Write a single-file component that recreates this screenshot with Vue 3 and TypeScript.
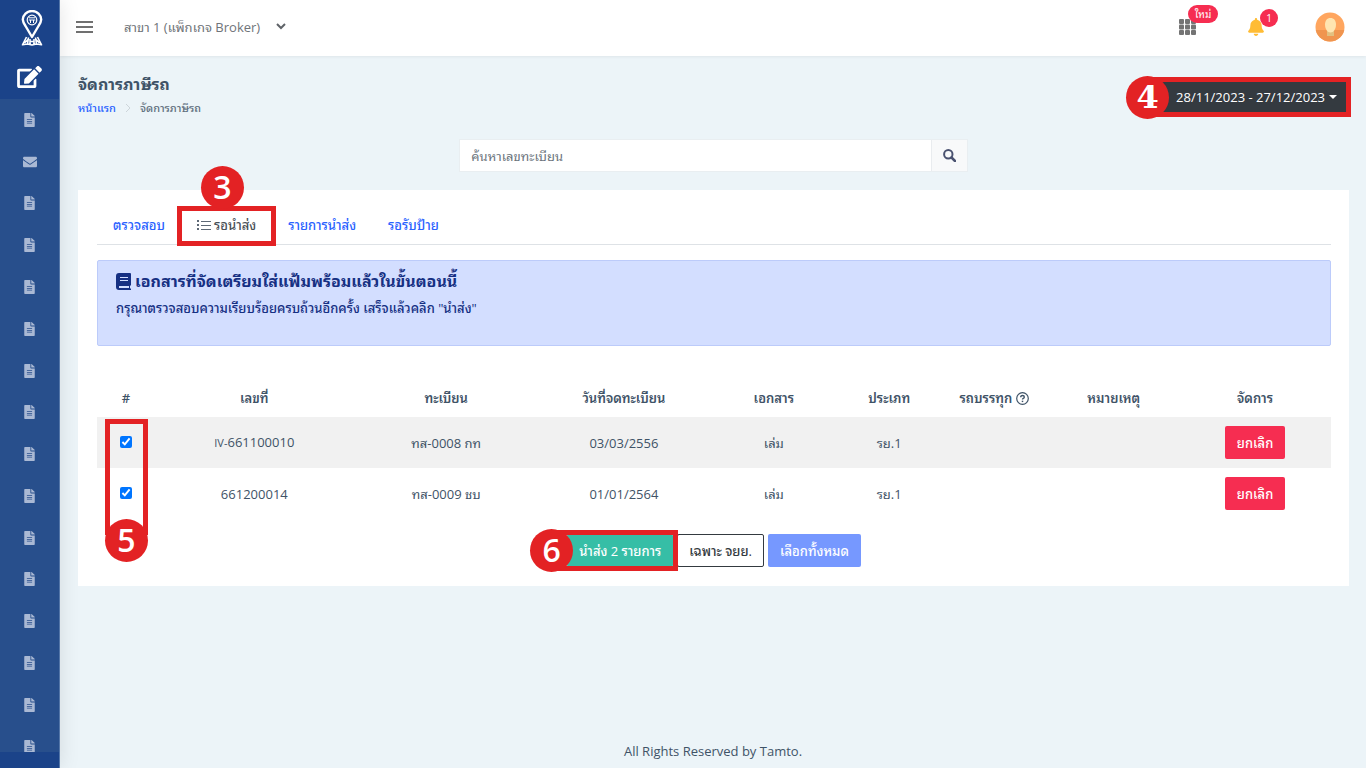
<script setup lang="ts">
import { computed, ref } from 'vue'

interface Row {
  prefix: string
  no: string
  plate: string
  date: string
  doc: string
  kind: string
  checked: boolean
}

const fileIcon =
  'M224 136V0H24C10.7 0 0 10.7 0 24v464c0 13.3 10.7 24 24 24h336c13.3 0 24-10.7 24-24V160H248c-13.2 0-24-10.8-24-24zm64 236c0 6.6-5.4 12-12 12H108c-6.6 0-12-5.4-12-12v-8c0-6.6 5.4-12 12-12h168c6.6 0 12 5.4 12 12v8zm0-64c0 6.6-5.4 12-12 12H108c-6.6 0-12-5.4-12-12v-8c0-6.6 5.4-12 12-12h168c6.6 0 12 5.4 12 12v8zm0-72v8c0 6.6-5.4 12-12 12H108c-6.6 0-12-5.4-12-12v-8c0-6.6 5.4-12 12-12h168c6.6 0 12 5.4 12 12zm96-114.1v6.1H256V0h6.1c6.4 0 12.5 2.5 17 7l97.9 98c4.5 4.5 7 10.6 7 16.9z'
const mailIcon =
  'M502.3 190.8c3.9-3.1 9.7-.2 9.7 4.7V400c0 26.5-21.5 48-48 48H48c-26.5 0-48-21.5-48-48V195.6c0-5 5.7-7.8 9.7-4.7 22.4 17.4 52.1 39.5 154.1 113.6 21.1 15.4 56.7 47.8 92.2 47.6 35.7.3 72-32.8 92.3-47.6 102-74.1 131.6-96.3 154-113.7zM256 320c23.2.4 56.6-29.2 73.4-41.4 132.7-96.3 142.8-104.7 173.4-128.7 5.8-4.5 9.2-11.5 9.2-18.9v-19c0-26.5-21.5-48-48-48H48c-26.5 0-48 21.5-48 48v19c0 7.4 3.4 14.3 9.2 18.9 30.6 23.9 40.7 32.4 173.4 128.7 16.8 12.2 50.2 41.8 73.4 41.4z'

const menu = ['file', 'mail', ...Array<string>(14).fill('file')]

const tabs = ['ตรวจสอบ', 'รอนำส่ง', 'รายการนำส่ง', 'รอรับป้าย']
const activeTab = ref(1)

const rows = ref<Row[]>([
  { prefix: 'IV-', no: '661100010', plate: 'ทส-0008 กท', date: '03/03/2556', doc: 'เล่ม', kind: 'รย.1', checked: true },
  { prefix: '', no: '661200014', plate: 'ทส-0009 ชบ', date: '01/01/2564', doc: 'เล่ม', kind: 'รย.1', checked: true },
])
const selected = computed(() => rows.value.filter((r) => r.checked).length)
const selectAll = () => rows.value.forEach((r) => (r.checked = true))
const keyword = ref('')
</script>

<template>
  <div class="shell">
    <nav class="sidebar" aria-label="เมนูหลัก">
      <a class="logo" href="#" aria-label="Tamto">
        <svg width="22" height="37" viewBox="0 0 22 37" fill="none" stroke="#fff">
          <path d="M11 27 4.500 16C2.500 13 1.800 11.500 1.800 9.600a9.200 8.600 0 0 1 18.400 0c0 1.900-.7 3.400-2.700 6.400z" stroke-width="2.400" stroke-linejoin="round" />
          <circle cx="11" cy="10" r="4.800" stroke-width="1.200" />
          <path d="M8 7.800h6M7.800 10h6.500M9.500 10v3M12.500 10v3" stroke-width="1" />
          <path d="M5.500 27 1.500 34.800l5-.8 4.500 1 4.500-1 5 .8L16.500 27M7.500 27.500l-1 6.500M14.500 27.500l1 6.500M3.500 33l4-4M18.500 33l-4-4M9 29v5M13 29v5M9 31.500h4" stroke-width="1.600" stroke-linejoin="round" />
        </svg>
      </a>
      <a class="side-active" href="#" aria-label="จัดการภาษีรถ">
        <svg width="25" height="22" viewBox="0 0 576 512" fill="#fff">
          <path d="M402.600 83.200l90.200 90.200c3.800 3.800 3.800 10 0 13.800L274.400 405.600l-92.800 10.300c-12.400 1.400-22.900-9.100-21.500-21.500l10.300-92.800L388.800 83.200c3.800-3.800 10-3.800 13.800 0zm162-22.900l-48.800-48.800c-15.200-15.200-39.900-15.200-55.200 0l-35.400 35.400c-3.800 3.800-3.800 10 0 13.800l90.200 90.200c3.800 3.800 10 3.800 13.800 0l35.400-35.400c15.200-15.300 15.200-40 0-55.200zM384 346.200V448H64V128h229.800c3.200 0 6.200-1.300 8.500-3.500l40-40c7.600-7.600 2.200-20.500-8.500-20.500H48C21.500 64 0 85.500 0 112v352c0 26.500 21.500 48 48 48h352c26.500 0 48-21.500 48-48V306.200c0-10.700-12.900-16-20.500-8.500l-40 40c-2.200 2.300-3.500 5.300-3.500 8.500z" />
        </svg>
      </a>
      <ul class="side-list">
        <li v-for="(m, i) in menu" :key="i">
          <a href="#" :aria-label="m === 'mail' ? 'ข้อความ' : 'เอกสาร'">
            <svg v-if="m === 'mail'" width="14" height="14" viewBox="0 0 512 512"><path :d="mailIcon" /></svg>
            <svg v-else width="11" height="14" viewBox="0 0 384 512"><path :d="fileIcon" /></svg>
          </a>
        </li>
      </ul>
      <div class="side-foot"></div>
    </nav>

    <div class="page">
      <header class="topbar">
        <button class="icon-btn" type="button" aria-label="เมนู">
          <svg width="17" height="12" viewBox="0 0 17 12" stroke="#707070" stroke-width="2"><path d="M0 1h17M0 6h17M0 11h17" /></svg>
        </button>
        <div class="branch">
          <select aria-label="สาขา">
            <option>สาขา 1 (แพ็กเกจ Broker)</option>
          </select>
          <svg width="10" height="7" viewBox="0 0 10 7" fill="none" stroke="#5f6368" stroke-width="2"><path d="M1 1l4 4 4-4" /></svg>
        </div>
        <div class="top-right">
          <button class="icon-btn" type="button" aria-label="แอป">
            <svg width="18" height="16" viewBox="0 0 18 16" fill="#747474">
              <g v-for="y in [0, 6, 12]" :key="y">
                <rect v-for="x in [0, 6, 12]" :key="x" :x="x" :y="y - y / 12" width="5" height="5" rx="1" />
              </g>
            </svg>
            <span class="pill">ใหม่</span>
          </button>
          <button class="icon-btn" type="button" aria-label="การแจ้งเตือน">
            <svg width="16" height="18" viewBox="0 0 448 512" fill="#ffbc34">
              <path d="M224 512c35.320 0 63.970-28.650 63.970-64H160.030c0 35.350 28.650 64 63.970 64zm215.390-149.710c-19.320-20.760-55.470-51.990-55.470-154.290 0-77.700-54.480-139.900-127.940-155.160V32c0-17.670-14.320-32-31.980-32s-31.980 14.330-31.980 32v20.840C118.560 68.100 64.080 130.300 64.080 208c0 102.300-36.150 133.530-55.470 154.290-6 6.450-8.660 14.160-8.610 21.710.11 16.400 12.980 32 32.100 32h383.800c19.120 0 32-15.600 32.100-32 .05-7.550-2.610-15.270-8.610-21.710z" />
            </svg>
            <span class="pill round">1</span>
          </button>
          <button class="icon-btn" type="button" aria-label="บัญชีผู้ใช้">
            <svg width="30" height="30" viewBox="0 0 30 30">
              <clipPath id="face"><circle cx="15" cy="15" r="14.500" /></clipPath>
              <g clip-path="url(#face)">
                <path fill="#ffa65f" d="M0 0h30v30H0z" />
                <path fill="#f0954f" d="M0 18h30v12H0z" />
                <path fill="#e2c080" d="M12 18h7v6h-7z" />
                <path fill="#ffe5b0" d="M15.500 6c3.500 0 5.500 2.700 5.500 6.500 0 4.500-2.500 8-5.500 8s-5.500-3.500-5.500-8C10 8.700 12 6 15.500 6z" />
              </g>
            </svg>
          </button>
        </div>
      </header>

      <main>
        <div class="heading">
          <div>
            <h1>จัดการภาษีรถ</h1>
            <div class="crumbs">
              <a href="#">หน้าแรก</a>
              <svg width="6" height="10" viewBox="0 0 6 10" fill="none" stroke="#cdd5da"><path d="M1 1l4 4-4 4" /></svg>
              <span>จัดการภาษีรถ</span>
            </div>
          </div>
          <div class="date-wrap">
            <button class="date" type="button">28/11/2023 - 27/12/2023 <i class="caret"></i></button>
            <span class="badge slab">4</span>
          </div>
        </div>

        <form class="search" @submit.prevent>
          <input v-model="keyword" type="text" placeholder="ค้นหาเลขทะเบียน" aria-label="ค้นหาเลขทะเบียน" />
          <button type="submit" aria-label="ค้นหา">
            <svg width="13" height="13" viewBox="0 0 13 13" fill="none" stroke="#4a5270" stroke-width="2"><circle cx="5.300" cy="5.300" r="4.200" /><path d="M8.500 8.500l3.500 3.500" stroke-width="2.500" stroke-linecap="round" /></svg>
          </button>
        </form>

        <section class="card">
          <div class="tabs" role="tablist">
            <button v-for="(t, i) in tabs" :key="t" type="button" role="tab" :aria-selected="i === activeTab" :class="['tab', { active: i === activeTab }]" @click="activeTab = i">
              <svg v-if="i === 1" width="14" height="10" viewBox="0 0 14 10" stroke="#5d6875" stroke-width="1"><path d="M4 1.500h10M4 5.500h10M4 9.500h10" /><path d="M0 1h2M0 5h2M0 9h2" stroke-width="2" /></svg>
              {{ t }}
              <span v-if="i === 1" class="frame tab-frame"><span class="badge">3</span></span>
            </button>
          </div>

          <div class="alert">
            <h2>
              <svg width="15" height="17" viewBox="0 0 15 17"><path fill="#163083" d="M3 0h11q1 0 1 1v11l-1 1v2l1 1v1H3q-3 0-3-3V3q0-3 3-3z" /><path stroke="#d3deff" d="M4 4.500h8M4 7.500h8" /><path stroke="#d3deff" stroke-width="2" d="M3 14h10" /></svg>
              เอกสารที่จัดเตรียมใส่แฟ้มพร้อมแล้วในขั้นตอนนี้
            </h2>
            <p>กรุณาตรวจสอบความเรียบร้อยครบถ้วนอีกครั้ง เสร็จแล้วคลิก "นำส่ง"</p>
          </div>

          <div class="table-wrap">
            <table>
              <colgroup>
                <col class="c1" /><col class="c2" /><col class="c3" /><col class="c4" /><col class="c5" /><col class="c6" /><col class="c7" /><col class="c8" /><col class="c9" />
              </colgroup>
              <thead>
                <tr>
                  <th>#</th>
                  <th>เลขที่</th>
                  <th>ทะเบียน</th>
                  <th>วันที่จดทะเบียน</th>
                  <th>เอกสาร</th>
                  <th>ประเภท</th>
                  <th>
                    รถบรรทุก
                    <svg class="help" width="13" height="13" viewBox="0 0 13 13" fill="none" stroke="#3f5367"><circle cx="6.500" cy="6.500" r="5.800" stroke-width="1.200" /><path d="M4.700 5.300q0-1.800 1.800-1.800t1.800 1.500q0 .9-1 1.400-.8.400-.8 1.200" stroke-width="1.400" /><path d="M6.500 8.700v1.400" stroke-width="1.500" /></svg>
                  </th>
                  <th>หมายเหตุ</th>
                  <th>จัดการ</th>
                </tr>
              </thead>
              <tbody>
                <tr v-for="r in rows" :key="r.no">
                  <td><input v-model="r.checked" type="checkbox" :aria-label="r.no" /></td>
                  <td><small v-if="r.prefix">{{ r.prefix }}</small>{{ r.no }}</td>
                  <td>{{ r.plate }}</td>
                  <td>{{ r.date }}</td>
                  <td>{{ r.doc }}</td>
                  <td>{{ r.kind }}</td>
                  <td></td>
                  <td></td>
                  <td><button class="btn danger" type="button">ยกเลิก</button></td>
                </tr>
              </tbody>
            </table>
            <span class="frame check-frame"><span class="badge">5</span></span>
          </div>

          <div class="actions">
            <div class="send-wrap">
              <button class="btn success" type="button">นำส่ง {{ selected }} รายการ</button>
              <span class="frame send-frame"></span>
              <span class="badge send-badge">6</span>
            </div>
            <button class="btn outline" type="button">เฉพาะ จยย.</button>
            <button class="btn soft" type="button" @click="selectAll">เลือกทั้งหมด</button>
          </div>
        </section>
      </main>
      <footer>All Rights Reserved by Tamto.</footer>
    </div>
  </div>
</template>

<style>
body {
  margin: 0;
  background: #ecf4f8;
}
</style>

<style scoped>
.shell {
  display: flex;
  height: 100vh;
  font-family: 'Open Sans', 'Noto Sans Thai Looped', Loma, 'Noto Sans Thai', 'Noto Sans', sans-serif;
  font-size: 13px;
  line-height: 20px;
  color: #3f5367;
}
.shell * {
  box-sizing: border-box;
}
button,
input,
select {
  font: inherit;
  color: inherit;
}
button {
  cursor: pointer;
}
a {
  text-decoration: none;
}
svg {
  flex: none;
}
.sidebar {
  flex: none;
  width: 60px;
  display: flex;
  flex-direction: column;
  background: #284f8c;
  border-right: 1px solid #5577a9;
  box-shadow: 1px 0 20px rgba(0, 0, 0, 0.1);
  overflow: hidden;
  z-index: 2;
}
.logo,
.side-active,
.side-list a {
  display: flex;
  align-items: center;
  justify-content: center;
}
.logo {
  flex: none;
  height: 56px;
  padding-left: 4px;
  background: #1b4389;
}
.side-active {
  flex: none;
  height: 43px;
  padding-bottom: 2px;
  background: #1b4389;
}
.side-list {
  flex: 1;
  min-height: 0;
  margin: 0;
  padding: 0;
  list-style: none;
  overflow: hidden;
}
.side-list li {
  height: 6.4%;
}
.side-list a {
  height: 100%;
  fill: #aab9d4;
}
.side-foot {
  flex: none;
  height: 16px;
  background: #1b4389;
}
.page {
  flex: 1;
  min-width: 0;
  display: flex;
  flex-direction: column;
}
.topbar {
  flex: none;
  height: 56px;
  display: flex;
  align-items: center;
  padding: 0 21px 3px 16px;
  background: #fff;
  box-shadow: 0 1px 3px rgba(0, 0, 0, 0.06);
}
.icon-btn {
  position: relative;
  display: flex;
  padding: 0;
  border: 0;
  background: none;
}
.branch {
  display: flex;
  align-items: center;
  gap: 15px;
  margin-left: 31px;
}
.branch select {
  appearance: none;
  padding: 0;
  border: 0;
  background: none;
  color: #6f7479;
}
.top-right {
  display: flex;
  align-items: center;
  gap: 51px;
  margin-left: auto;
}
.pill {
  position: absolute;
  top: -14px;
  left: 9px;
  width: 30px;
  height: 18px;
  border-radius: 9px;
  background: #f62d51;
  color: #fff;
  font-size: 10px;
  line-height: 18px;
}
.pill.round {
  top: -9px;
  left: 12px;
  width: 18px;
}
main {
  flex: 1;
  padding: 16px 17px 0 18px;
}
.heading {
  display: flex;
  justify-content: space-between;
}
h1 {
  margin: 0;
  font-size: 16px;
  line-height: 24px;
}
.crumbs {
  display: flex;
  align-items: center;
  gap: 9px;
  padding-top: 2px;
  font-size: 11px;
  font-weight: 500;
  color: #5f6f7e;
}
.crumbs a {
  color: #2962ff;
}
.date-wrap {
  position: relative;
  align-self: flex-start;
  margin: 5px -2px 0 0;
  border: 5px solid #e32224;
}
.date {
  display: flex;
  align-items: center;
  gap: 4px;
  height: 30px;
  padding: 0 9px 0 23px;
  border: 0;
  background: #343a40;
  color: #fff;
  white-space: nowrap;
}
.caret {
  border: 4px solid transparent;
  border-top-color: #fff;
  border-bottom: 0;
}
.badge {
  position: absolute;
  width: 43px;
  height: 43px;
  border-radius: 50%;
  background: #e32224;
  color: #fff;
  font: 600 32px/42px 'Open Sans', sans-serif;
  text-align: center;
}
.slab {
  top: -6px;
  left: -27px;
  font-family: 'DejaVu Serif', serif;
}
.frame {
  position: absolute;
  border: 5px solid #e32224;
  pointer-events: none;
}
.search {
  display: flex;
  width: 40%;
  height: 33px;
  margin: 21px auto 18px;
  border: 1px solid #e9eef1;
}
.search input {
  flex: 1;
  min-width: 0;
  padding: 0 11px;
  border: 0;
  background: #fff;
}
.search input::placeholder {
  color: #6c757d;
  opacity: 1;
}
.search button {
  width: 36px;
  padding: 0;
  border: 0;
  border-left: 1px solid #e9ecef;
  background: #f8f9fa;
}
.search svg {
  display: block;
  margin: auto;
}
.card {
  padding: 16px 18px 19px 19px;
  background: #fff;
}
.tabs {
  display: flex;
  height: 39px;
  border-bottom: 1px solid #dee2e6;
}
.tab {
  position: relative;
  display: flex;
  align-items: center;
  gap: 3px;
  padding: 0 16px;
  border: 0;
  background: none;
  color: #2962ff;
  font-weight: 500;
}
.tab.active {
  color: #495057;
}
.tab-frame {
  inset: 0 -4px -2px -4px;
}
.tab-frame .badge {
  left: 19px;
  top: -45px;
}
.alert {
  height: 86px;
  margin: 15px 0 32px;
  padding: 8px 18px;
  border: 1px solid #bccbfa;
  border-radius: 2px;
  background: #d3deff;
  color: #163083;
}
.alert h2 {
  display: flex;
  align-items: center;
  gap: 4px;
  margin: 0 0 5px;
  font-size: 16px;
  line-height: 24px;
}
.alert p {
  margin: 0;
  font-weight: 500;
}
.table-wrap {
  position: relative;
}
table {
  width: 100%;
  table-layout: fixed;
  border-collapse: collapse;
  text-align: center;
}
.c1 { width: 4.7%; }
.c2 { width: 16.1%; }
.c3 { width: 15%; }
.c4 { width: 13.8%; }
.c5 { width: 10.5%; }
.c6 { width: 8.2%; }
.c7 { width: 8.8%; }
.c8 { width: 10.6%; }
.c9 { width: 12.3%; }
th {
  height: 39px;
  padding: 0;
  font-weight: 600;
  white-space: nowrap;
}
td {
  height: 51px;
  padding: 0;
}
tbody tr:nth-child(odd) {
  background: #f1f1f1;
}
small {
  font-size: 11px;
}
.help {
  vertical-align: -2px;
}
td input {
  width: 12px;
  height: 12px;
  margin: 0;
  accent-color: #0075ff;
}
.check-frame {
  left: 8px;
  top: 41px;
  width: 43px;
  height: 116px;
}
.check-frame .badge {
  left: -5px;
  top: 95px;
}
.btn {
  height: 33px;
  padding: 0 11px;
  border: 1px solid transparent;
  border-radius: 2px;
  color: #fff;
  font-weight: 500;
  white-space: nowrap;
}
.danger {
  background: #f62d51;
}
.actions {
  display: flex;
  justify-content: center;
  gap: 4px;
  margin-top: 15px;
}
.send-wrap {
  position: relative;
}
.success {
  background: #36bea6;
}
.outline {
  background: #fff;
  border-color: #343a40;
  color: #343a40;
}
.soft {
  background: #7698ff;
}
.send-frame {
  inset: -4px -5px -4px -15px;
}
.send-badge {
  top: -5px;
  left: -37px;
}
footer {
  padding: 0 0 7px;
  text-align: center;
}
</style>
